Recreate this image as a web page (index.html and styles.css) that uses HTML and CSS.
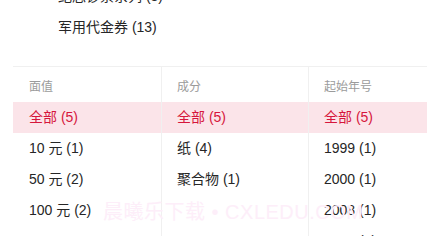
FILE: index.html
```html
<!DOCTYPE html>
<html lang="zh">
<head>
<meta charset="utf-8">
<link rel="stylesheet" href="styles.css">
</head>
<body>
<div class="page">
  <div class="cats">
    <div class="cat">纪念钞票系列 (8)</div>
    <div class="cat">军用代金券 (13)</div>
  </div>
  <div class="table">
    <div class="col">
      <div class="head">面值</div>
      <div class="row sel">全部 (5)</div>
      <div class="row">10 元 (1)</div>
      <div class="row">50 元 (2)</div>
      <div class="row">100 元 (2)</div>
      <div class="row"></div>
    </div>
    <div class="col">
      <div class="head">成分</div>
      <div class="row sel">全部 (5)</div>
      <div class="row">纸 (4)</div>
      <div class="row">聚合物 (1)</div>
      <div class="row"></div>
      <div class="row"></div>
    </div>
    <div class="col">
      <div class="head">起始年号</div>
      <div class="row sel">全部 (5)</div>
      <div class="row">1999 (1)</div>
      <div class="row">2000 (1)</div>
      <div class="row">2008 (1)</div>
      <div class="row">2015 (1)</div>
    </div>
  </div>
  <div class="wm">晨曦乐下载 • CXLEDU.COM</div>
</div>
</body>
</html>
```

FILE: styles.css
```css
html, body {
  margin: 0;
  padding: 0;
  background: #fff;
}
body {
  font-family: "Liberation Sans", "Noto Sans CJK SC", sans-serif;
  color: #262626;
}
.page {
  position: relative;
  width: 445px;
  height: 236px;
  overflow: hidden;
}
.cats {
  height: 66px;
  display: flex;
  flex-direction: column;
  justify-content: flex-end;
  padding: 0 0 23px 58px;
  box-sizing: border-box;
  overflow: hidden;
}
.cat {
  flex: none;
  height: 31px;
  line-height: 31px;
  font-size: 14px;
}
.table {
  margin-left: 13px;
  width: 414px;
  display: flex;
  overflow: hidden;
  border-top: 1px solid #f0f0f0;
}
.col {
  flex: none;
  width: 148px;
  box-sizing: border-box;
}
.col + .col {
  width: 147px;
  border-left: 1px solid #f0f0f0;
}
.head {
  height: 35px;
  box-sizing: border-box;
  padding: 12px 0 0 16px;
  font-size: 12px;
  line-height: 17px;
  color: #9b9b9b;
}
.row {
  height: 31px;
  line-height: 31px;
  padding-left: 16px;
  font-size: 14px;
}
.col + .col .row,
.col + .col .head {
  padding-left: 15px;
}
.row.sel {
  background: #fbe4e9;
  color: #d6163c;
}
.wm {
  position: absolute;
  left: 103px;
  top: 199px;
  font-size: 20px;
  line-height: 26px;
  color: #fdeef9;
  white-space: nowrap;
  letter-spacing: 0.5px;
}
```
